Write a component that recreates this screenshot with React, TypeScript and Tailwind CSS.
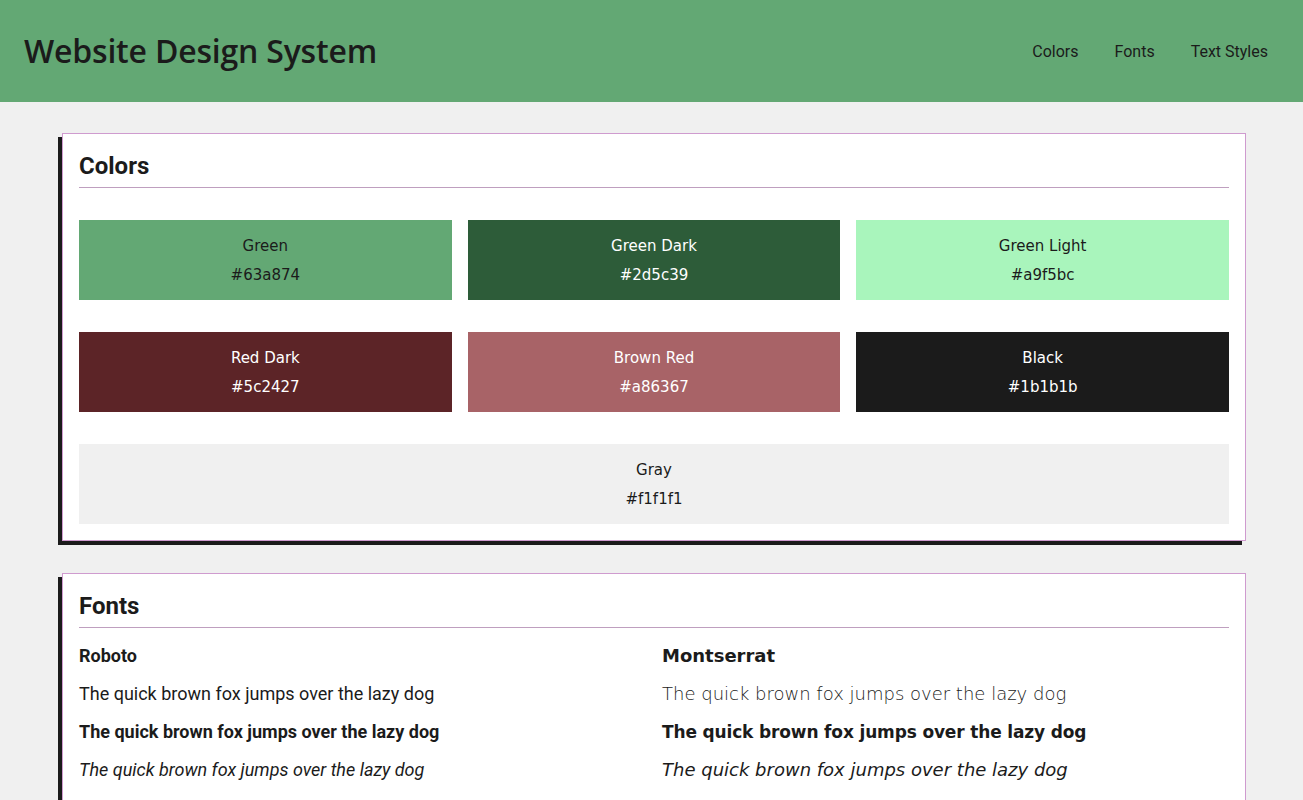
const swatches = [
  { name: "Green", hex: "#63a874", bg: "bg-[#63a874]", text: "text-[#1b1b1b]" },
  { name: "Green Dark", hex: "#2d5c39", bg: "bg-[#2d5c39]", text: "text-white" },
  { name: "Green Light", hex: "#a9f5bc", bg: "bg-[#a9f5bc]", text: "text-[#1b1b1b]" },
  { name: "Red Dark", hex: "#5c2427", bg: "bg-[#5c2427]", text: "text-white" },
  { name: "Brown Red", hex: "#a86367", bg: "bg-[#a86367]", text: "text-white" },
  { name: "Black", hex: "#1b1b1b", bg: "bg-[#1b1b1b]", text: "text-white" },
];

const sample = "The quick brown fox jumps over the lazy dog";

const mont = "font-['DejaVu_Sans',sans-serif]";

function Card({ title, children }: { title: string; children: React.ReactNode }) {
  return (
    <section className="w-[1184px] bg-white border border-[#cf9bcf] shadow-[-4px_4px_0_#1b1b1b] px-4 pt-4 pb-4">
      <h2 className="text-[24px] leading-[29px] font-bold text-[#1b1b1b] pt-[2px] pb-[6px] border-b border-[#bf9fbf]">
        {title}
      </h2>
      {children}
    </section>
  );
}

function Swatch({ name, hex, bg, text, wide }: { name: string; hex: string; bg: string; text: string; wide?: boolean }) {
  return (
    <div className={`${bg} ${text} ${wide ? "col-span-3" : ""} h-20 flex flex-col items-center justify-center pt-[2px] ${mont} text-[15px] leading-[29px]`}>
      <span>{name}</span>
      <span>{hex}</span>
    </div>
  );
}

export default function App() {
  return (
    <div className="min-h-screen bg-[#f0f0f0] font-['Roboto',sans-serif] text-[#1b1b1b]">
      <header className="h-[102px] bg-[#63a874] flex items-center justify-between pl-6 pr-[35px]">
        <h1 className="text-[32px] font-semibold font-['Open_Sans',sans-serif] text-[#1b1b1b] tracking-[-0.2px]">
          Website Design System
        </h1>
        <nav className="flex gap-9 text-[16px] text-[#1b1b1b] pt-[2px]">
          <a href="#colors">Colors</a>
          <a href="#fonts">Fonts</a>
          <a href="#text-styles">Text Styles</a>
        </nav>
      </header>

      <main className="pl-[62px] pt-[31px] pb-10 flex flex-col gap-8">
        <Card title="Colors">
          <div className="grid grid-cols-3 gap-x-4 gap-y-8 mt-8">
            {swatches.map((s) => (
              <Swatch key={s.name} {...s} />
            ))}
            <Swatch name="Gray" hex="#f1f1f1" bg="bg-[#f0f0f0]" text="text-[#1b1b1b]" wide />
          </div>
        </Card>

        <Card title="Fonts">
          <div className="grid grid-cols-2 gap-x-4 mt-2">
            <div className="flex flex-col">
              <div className="h-[38px] flex items-center text-[18px] font-bold">Roboto</div>
              <div className="h-[38px] flex items-center text-[18px]">{sample}</div>
              <div className="h-[38px] flex items-center text-[18px] font-bold">{sample}</div>
              <div className="h-[38px] flex items-center text-[18px] italic">{sample}</div>
            </div>
            <div className={`flex flex-col ${mont}`}>
              <div className="h-[38px] flex items-center text-[18px] font-bold">Montserrat</div>
              <div className="h-[38px] flex items-center text-[18px] font-light">{sample}</div>
              <div className="h-[38px] flex items-center pt-[3px] text-[17px] font-bold tracking-[-0.15px]">{sample}</div>
              <div className="h-[38px] flex items-center text-[18px] font-light italic">{sample}</div>
            </div>
          </div>
        </Card>
      </main>
    </div>
  );
}
